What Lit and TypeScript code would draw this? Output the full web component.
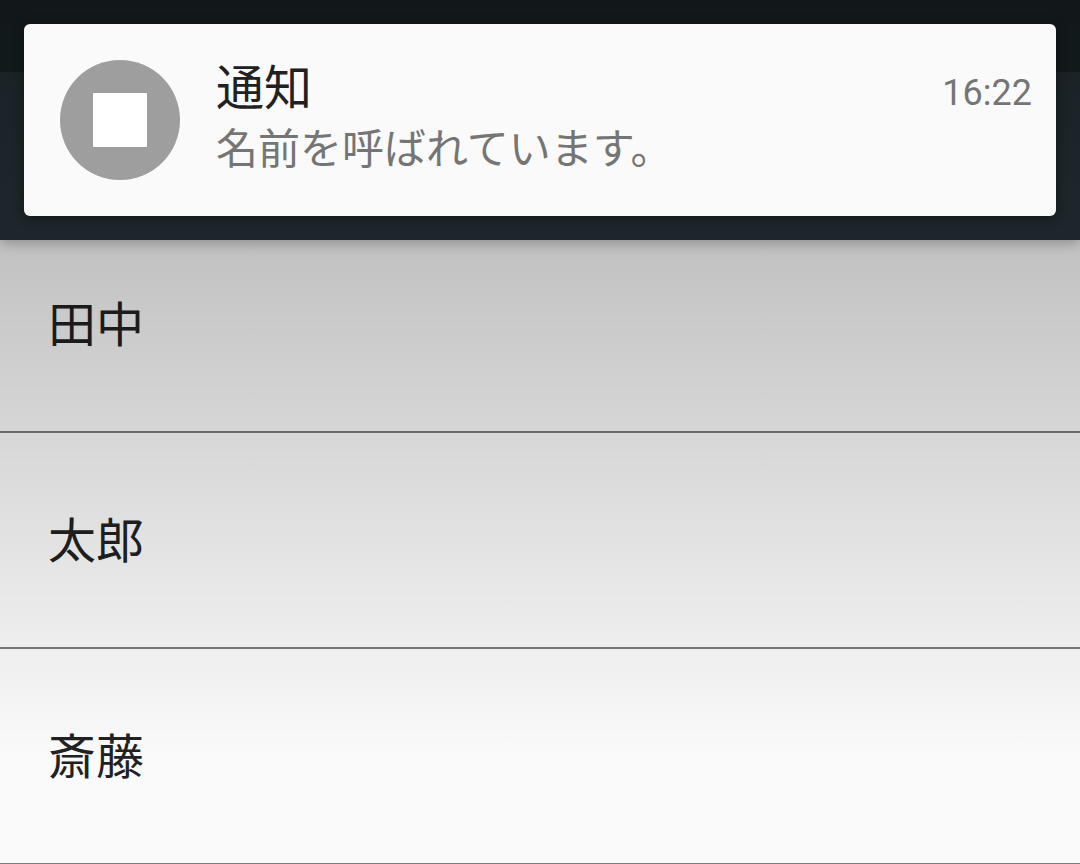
import { LitElement, html, css } from "lit";
import { customElement, property } from "lit/decorators.js";

@customElement("heads-up-notification")
class HeadsUpNotification extends LitElement {
  @property() heading = "";
  @property() message = "";
  @property() time = "";

  static styles = css`
    :host {
      display: block;
    }
    .card {
      box-sizing: border-box;
      display: flex;
      gap: 36px;
      min-height: 192px;
      padding: 36px 24px 24px 36px;
      border-radius: 6px;
      background: #fafafa;
      box-shadow: 0 2px 12px rgba(0, 0, 0, 0.4);
    }
    .icon {
      flex: none;
      width: 120px;
      height: 120px;
    }
    .body {
      flex: 1;
      min-width: 0;
    }
    .top {
      display: flex;
      align-items: baseline;
      justify-content: space-between;
      gap: 24px;
      line-height: 58px;
    }
    .title {
      margin: 0;
      font-size: 48px;
      font-weight: 400;
      color: #212121;
    }
    .time {
      font-size: 36px;
      color: #757575;
    }
    .message {
      margin: 0;
      font-size: 42px;
      line-height: 56px;
      color: #757575;
    }
  `;

  render() {
    return html`
      <article class="card">
        <svg class="icon" viewBox="0 0 120 120" aria-hidden="true">
          <circle cx="60" cy="60" r="60" fill="#9e9e9e" />
          <rect x="33" y="33" width="54" height="54" fill="#fff" />
        </svg>
        <div class="body">
          <div class="top">
            <h2 class="title">${this.heading}</h2>
            <time class="time">${this.time}</time>
          </div>
          <p class="message">${this.message}</p>
        </div>
      </article>
    `;
  }
}

@customElement("app-root")
class AppRoot extends LitElement {
  @property({ attribute: false }) names = ["田中", "太郎", "斎藤"];

  static styles = css`
    :host {
      display: block;
      position: relative;
      height: 100vh;
      overflow: hidden;
      background: #fafafa;
      font-family: Roboto, "Noto Sans CJK JP", sans-serif;
    }
    .bar {
      position: relative;
      z-index: 1;
      background: #263238;
      box-shadow: 0 4px 12px rgba(0, 0, 0, 0.24);
    }
    .status {
      height: 72px;
      background: #1a2427;
    }
    .toolbar {
      height: 168px;
    }
    /* The list is scrolled slightly under the toolbar. */
    .list {
      margin: -23px 0 0;
      padding: 0;
      list-style: none;
    }
    .row {
      box-sizing: border-box;
      display: flex;
      align-items: center;
      min-height: 216px;
      padding: 4px 48px 0;
      border-bottom: 2px solid #7b7b7b;
      font-size: 48px;
      line-height: 72px;
      color: #212121;
    }
    .scrim {
      position: absolute;
      z-index: 2;
      top: 0;
      left: 0;
      right: 0;
      height: 756px;
      background: linear-gradient(rgba(0, 0, 0, 0.333), rgba(0, 0, 0, 0));
      pointer-events: none;
    }
    .notification {
      position: absolute;
      z-index: 3;
      top: 24px;
      left: 24px;
      right: 24px;
    }
  `;

  render() {
    return html`
      <header class="bar">
        <div class="status"></div>
        <div class="toolbar"></div>
      </header>
      <ul class="list">
        ${this.names.map((name) => html`<li class="row">${name}</li>`)}
      </ul>
      <div class="scrim"></div>
      <heads-up-notification
        class="notification"
        heading="通知"
        message="名前を呼ばれています。"
        time="16:22"
      ></heads-up-notification>
    `;
  }
}
